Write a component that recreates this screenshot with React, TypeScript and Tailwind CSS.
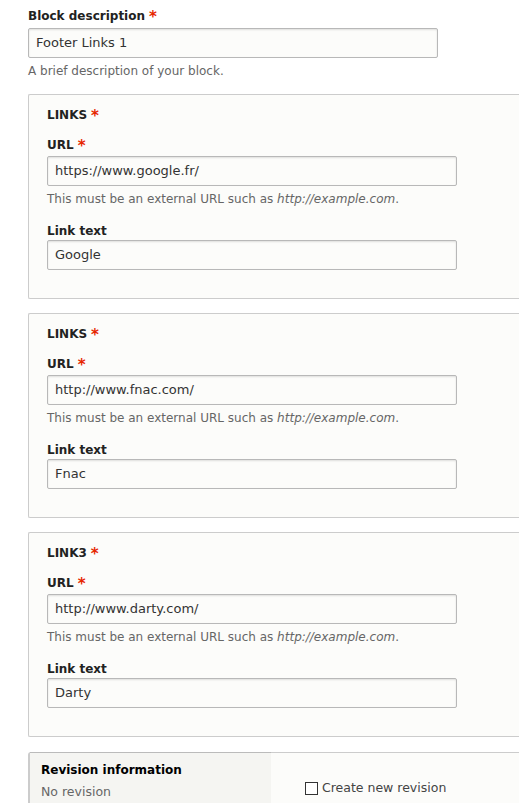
import React from "react";

const font = { fontFamily: '"DejaVu Sans", "Lucida Grande", sans-serif' };

function Req() {
  return <span className="ml-[4px] text-[#e62600] font-bold text-[15px] leading-none relative top-[1px]">*</span>;
}

function Label({ children, req }: { children: React.ReactNode; req?: boolean }) {
  return (
    <div className="text-[12px] font-bold text-[#222] h-[16px] flex items-center">
      {children}
      {req && <Req />}
    </div>
  );
}

function Input({ value }: { value: string }) {
  return (
    <div className="w-[410px] h-[30px] border border-[#b8b8b8] rounded-[2px] bg-[#fcfcfa] shadow-[inset_0_1px_2px_rgba(0,0,0,0.12)] flex items-center px-[7px] text-[13px] text-[#333]">
      {value}
    </div>
  );
}

function LinkFieldset({ title, url, text }: { title: string; url: string; text: string }) {
  return (
    <div className="ml-[28px] w-[500px] h-[205px] border border-[#ccc] rounded-l-[2px] border-r-0 bg-[#fcfcfa] pl-[18px] pt-[12px]">
      <div className="uppercase">
        <Label req>{title}</Label>
      </div>
      <div className="mt-[14px]">
        <Label req>URL</Label>
      </div>
      <div className="mt-[3px]">
        <Input value={url} />
      </div>
      <div className="mt-[5px] text-[12px] text-[#666] h-[16px] flex items-center">
        This must be an external URL such as&nbsp;<em>http://example.com</em>.
      </div>
      <div className="mt-[16px]">
        <Label>Link text</Label>
      </div>
      <div className="mt-[1px]">
        <Input value={text} />
      </div>
    </div>
  );
}

export default function App() {
  return (
    <div className="w-[519px] h-[803px] bg-white overflow-hidden" style={font}>
      <div className="pt-[8px] pl-[28px]">
        <Label req>Block description</Label>
        <div className="mt-[4px]">
          <Input value="Footer Links 1" />
        </div>
        <div className="mt-[5px] text-[12px] text-[#666] h-[16px] flex items-center">A brief description of your block.</div>
      </div>
      <div className="mt-[15px] flex flex-col gap-[14px]">
        <LinkFieldset title="Links" url="https://www.google.fr/" text="Google" />
        <LinkFieldset title="Links" url="http://www.fnac.com/" text="Fnac" />
        <LinkFieldset title="Link3" url="http://www.darty.com/" text="Darty" />
      </div>
      <div className="mt-[15px] ml-[28px] w-[500px] h-[60px] border-t border-l-2 border-[#ccc] rounded-tl-[3px] flex">
        <div className="w-[241px] bg-[#f5f5f2] border-t border-[#bbb] -mt-px pl-[11px] pt-[9px]">
          <div className="text-[12px] font-bold text-[#000] h-[16px] flex items-center">Revision information</div>
          <div className="mt-[6px] text-[12.5px] text-[#666] h-[16px] flex items-center">No revision</div>
        </div>
        <div className="flex-1 bg-[#fcfcfa] pl-[34px] pt-[26px]">
          <div className="flex items-center text-[12.5px] text-[#444]">
            <span className="w-[13px] h-[13px] border border-[#333] bg-white mr-[4px]" />
            Create new revision
          </div>
        </div>
      </div>
    </div>
  );
}
